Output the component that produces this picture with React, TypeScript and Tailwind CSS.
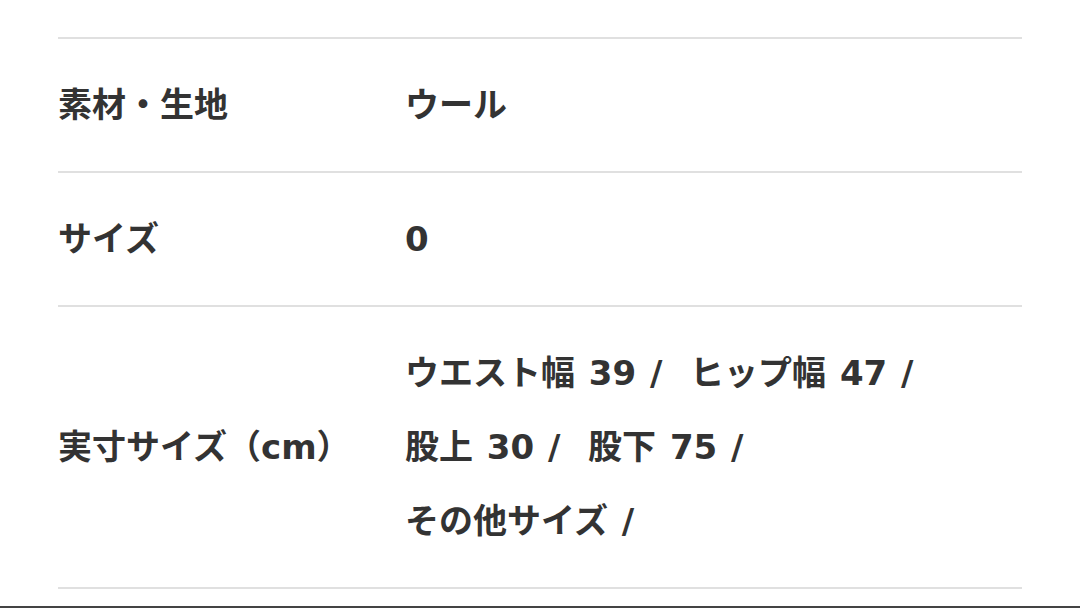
const rows: { label: string; lines: string[] }[] = [
  { label: "素材・生地", lines: ["ウール"] },
  { label: "サイズ", lines: ["0"] },
  {
    label: "実寸サイズ（cm）",
    lines: ["ウエスト幅 39 /  ヒップ幅 47 /", "股上 30 /  股下 75 /", "その他サイズ /"],
  },
];

export default function App() {
  return (
    <div
      className="w-[1080px] h-[608px] overflow-hidden bg-white flex flex-col"
      style={{ fontFamily: '"DejaVu Sans", "Noto Sans CJK JP", sans-serif' }}
    >
      <div className="px-[58px] pt-[37px]">
        <div className="border-t-2 border-[#e0e0e0]">
          {rows.map((row) => (
            <div key={row.label} className="flex items-center border-b-2 border-[#e0e0e0] py-[29px]">
              <div className="w-[347px] shrink-0 text-[34px] leading-[74px] font-bold text-[#333] whitespace-pre">
                {row.label}
              </div>
              <div className="flex flex-col">
                {row.lines.map((line) => (
                  <div key={line} className="text-[34px] leading-[74px] font-bold text-[#333] whitespace-pre [word-spacing:2px]">
                    {line}
                  </div>
                ))}
              </div>
            </div>
          ))}
        </div>
      </div>
      <div className="mt-auto h-[2px] bg-[#444]" />
    </div>
  );
}
